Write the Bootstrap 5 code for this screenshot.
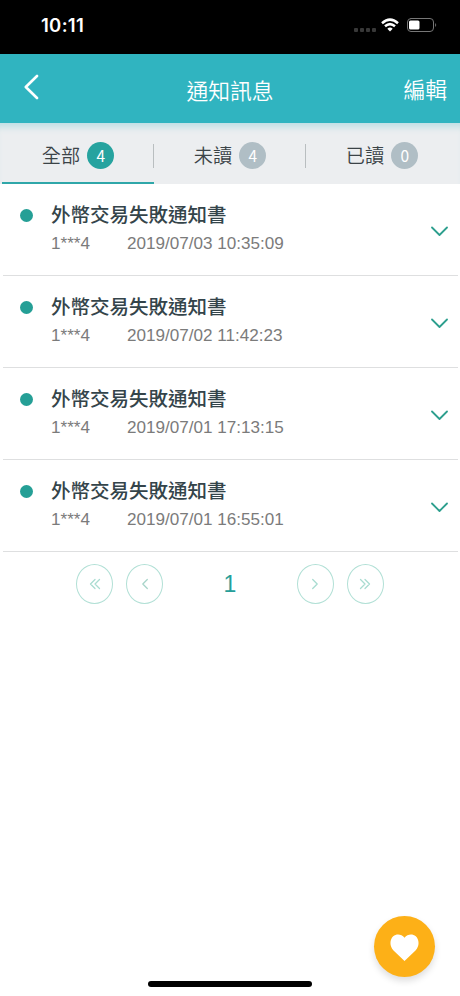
<!DOCTYPE html>
<html lang="zh-Hant">
<head>
<meta charset="utf-8">
<meta name="viewport" content="width=device-width, initial-scale=1">
<title>通知訊息</title>
<link rel="stylesheet" href="https://cdn.jsdelivr.net/npm/bootstrap@5.3.0/dist/css/bootstrap.min.css">
<style>
body{font-family:"Liberation Sans","Noto Sans CJK TC",sans-serif;background:#fff;color:#37474f}
svg{display:block;fill:none;stroke-linecap:round;stroke-linejoin:round}
.screen{width:460px;height:996px;overflow:hidden}
.status{height:54px;background:#000;padding:0 23px 4px 41px}
.clock{font:600 18.5px/1 Inter,sans-serif;letter-spacing:.3px}
.cells{gap:2px;padding-top:9px;margin-right:5px}
.cells i{width:4px;height:4px;border-radius:1px;background:#383838}
.wifi{stroke-linecap:butt}
.topbar{height:69px;background:#30b4c0;padding:0 13px 0 24px;font-family:"Noto Sans CJK TC",sans-serif;font-size:21.8px;font-weight:350;line-height:30px}
.topbar>*{flex:1 1 0}
.topbar h1{font-size:inherit;font-weight:inherit;line-height:inherit;padding:3px 11px 0 0;flex:1 1 11px;white-space:nowrap}
.topbar .edit{padding-top:1px}
.topbar a{padding-bottom:4px}
.tabs{height:61px;background:#eceef0;padding:0 2px;box-shadow:inset 0 9px 7px -5px #bddfe4}
.tabs .nav-link{flex:1 1 0;height:61px;padding:5px 0 0;gap:7px;border-bottom:2px solid transparent;color:#3b4347;font-family:"Noto Sans CJK TC",sans-serif;font-size:19.2px;font-weight:350;line-height:28px;position:relative}
.tabs .nav-link.active{border-color:#2fa7a9}
.tabs .nav-link+.nav-link::before{content:"";position:absolute;left:-1px;top:21px;width:1px;height:24px;background:#b9bec0}
.count{width:27px;height:27px;margin-top:1px;background:#b0bec5;font:400 15.5px/26px "Noto Sans CJK TC",sans-serif}
.active .count{background:#26a39f}
.notices{padding:0 2px 0 3px;border-radius:0}
.notices .notice{height:92px;padding:18px 10px 0 17px;border:0;border-bottom:1px solid #dedfe0;border-radius:0;background:none}
.dot{width:13px;height:13px;background:#259f96;margin-top:7px;margin-right:18px}
.notice h2{font-size:19.5px;line-height:26px;font-weight:500;color:#34444a}
.meta{font-size:17.1px;line-height:22px;color:#7b7b7b;margin-top:5px}
.meta span:first-child{width:76px}
.arrow{margin-top:24px}
.pager{padding:12px 76px 0}
.pager-group{gap:13px}
.pager .btn{width:37px;height:40px;border:1px solid #b2e0d6;border-radius:50%;padding:0}
.page-no{font-size:23px;color:#269e99;line-height:40px}
.fab{width:61px;height:61px;right:25px;bottom:19px;background:#fdb017;box-shadow:0 4px 7px #0002;border:0}
.fab svg{fill:#fff;margin-top:2px}
.home{width:164px;height:6px;border-radius:3px;background:#000;bottom:9px;left:148px}
</style>
<script src="https://cdn.jsdelivr.net/npm/bootstrap@5.3.0/dist/js/bootstrap.bundle.min.js"></script>
</head>
<body>
<div class="screen position-relative">
  <div class="status d-flex align-items-center justify-content-between text-white">
    <span class="clock">10:11</span>
    <div class="d-flex align-items-center">
      <div class="cells d-flex"><i></i><i></i><i></i><i></i></div>
      <svg class="wifi" width="18" height="14" viewBox="0 0 18 14" stroke="#fff" stroke-width="2.5"><path d="M1 5.2Q9-2 17 5.2M4 8.3Q9 3.9 14 8.3"/><path d="M6.3 10.7Q9 8.5 11.7 10.7L9 13.4Z" fill="#fff" stroke="none"/></svg>
      <svg class="ms-2" width="30" height="14" viewBox="0 0 30 14"><rect x=".5" y=".5" width="26" height="13" rx="3.5" stroke="#777"/><rect x="2" y="2.5" width="10.5" height="9" rx="1.5" fill="#fff"/><path d="M28.2 5q2 2 0 4z" fill="#777"/></svg>
    </div>
  </div>
  <header class="topbar d-flex align-items-center text-white">
    <a href="#" aria-label="返回"><svg width="15" height="26" viewBox="0 0 15 26" stroke="#fff" stroke-width="2.6"><path d="M13 2 1.8 13 13 24"/></svg></a>
    <h1 class="text-center mb-0">通知訊息</h1>
    <span class="edit text-end">編輯</span>
  </header>
  <nav class="tabs nav flex-nowrap">
    <a class="nav-link active d-flex align-items-center justify-content-center" href="#">全部<span class="count rounded-circle text-white text-center">4</span></a>
    <a class="nav-link d-flex align-items-center justify-content-center" href="#">未讀<span class="count rounded-circle text-white text-center">4</span></a>
    <a class="nav-link d-flex align-items-center justify-content-center" href="#">已讀<span class="count rounded-circle text-white text-center">0</span></a>
  </nav>
  <main>
    <div class="notices list-group">
      <div class="notice list-group-item d-flex align-items-start"><span class="dot rounded-circle"></span><div class="flex-grow-1"><h2 class="mb-0">外幣交易失敗通知書</h2><div class="meta d-flex"><span>1***4</span><span>2019/07/03 10:35:09</span></div></div><svg class="arrow" width="17" height="11" viewBox="0 0 17 11" stroke="#2d9f8e" stroke-width="1.8"><path d="M1 1.5 8.5 9 16 1.5"/></svg></div>
      <div class="notice list-group-item d-flex align-items-start"><span class="dot rounded-circle"></span><div class="flex-grow-1"><h2 class="mb-0">外幣交易失敗通知書</h2><div class="meta d-flex"><span>1***4</span><span>2019/07/02 11:42:23</span></div></div><svg class="arrow" width="17" height="11" viewBox="0 0 17 11" stroke="#2d9f8e" stroke-width="1.8"><path d="M1 1.5 8.5 9 16 1.5"/></svg></div>
      <div class="notice list-group-item d-flex align-items-start"><span class="dot rounded-circle"></span><div class="flex-grow-1"><h2 class="mb-0">外幣交易失敗通知書</h2><div class="meta d-flex"><span>1***4</span><span>2019/07/01 17:13:15</span></div></div><svg class="arrow" width="17" height="11" viewBox="0 0 17 11" stroke="#2d9f8e" stroke-width="1.8"><path d="M1 1.5 8.5 9 16 1.5"/></svg></div>
      <div class="notice list-group-item d-flex align-items-start"><span class="dot rounded-circle"></span><div class="flex-grow-1"><h2 class="mb-0">外幣交易失敗通知書</h2><div class="meta d-flex"><span>1***4</span><span>2019/07/01 16:55:01</span></div></div><svg class="arrow" width="17" height="11" viewBox="0 0 17 11" stroke="#2d9f8e" stroke-width="1.8"><path d="M1 1.5 8.5 9 16 1.5"/></svg></div>
    </div>
    <div class="pager d-flex justify-content-between align-items-center">
      <div class="pager-group d-flex">
        <button class="btn d-flex align-items-center justify-content-center" aria-label="第一頁"><svg width="12" height="12" viewBox="0 0 12 12" stroke="#a9dcd1" stroke-width="1.3"><path d="M6 1.5 1.5 6 6 10.5M10.5 1.5 6 6l4.5 4.5"/></svg></button>
        <button class="btn d-flex align-items-center justify-content-center" aria-label="上一頁"><svg width="12" height="12" viewBox="0 0 12 12" stroke="#a9d5ca" stroke-width="1.3"><path d="M8.3 1.5 3.8 6l4.5 4.5"/></svg></button>
      </div>
      <span class="page-no">1</span>
      <div class="pager-group d-flex">
        <button class="btn d-flex align-items-center justify-content-center" aria-label="下一頁"><svg width="12" height="12" viewBox="0 0 12 12" stroke="#a9dcd1" stroke-width="1.3"><path d="M3.7 1.5 8.2 6l-4.5 4.5"/></svg></button>
        <button class="btn d-flex align-items-center justify-content-center" aria-label="最後一頁"><svg width="12" height="12" viewBox="0 0 12 12" stroke="#a9dcd1" stroke-width="1.3"><path d="M1.5 1.5 6 6l-4.5 4.5M6 1.5 10.5 6 6 10.5"/></svg></button>
      </div>
    </div>
  </main>
  <button class="fab rounded-circle position-absolute d-flex align-items-center justify-content-center p-0" aria-label="我的最愛"><svg width="29" height="27" viewBox="0 0 29 27"><path d="M14.5 27 3.5 16.5C-1 12 0 5 3.2 2.3 6.6-.6 11.5 0 14.5 3.7 17.5 0 22.4-.6 25.8 2.3 29 5 30 12 25.5 16.5Z"/></svg></button>
  <div class="home position-absolute"></div>
</div>
</body>
</html>
